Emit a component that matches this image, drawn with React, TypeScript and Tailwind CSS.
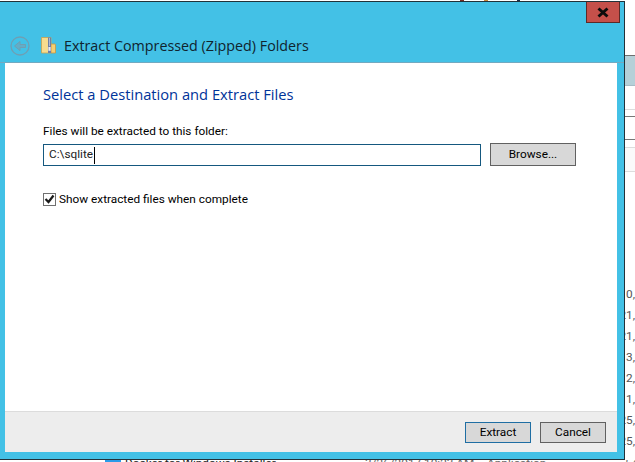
const font = "font-['Open_Sans','Noto_Sans',sans-serif]";
const small = "font-['Roboto','Open_Sans',sans-serif] text-[11.8px]";

const sideRows = ["0,", "21,", "21,", "3,", "2,", "1,", "25,", "25,"];

function BackIcon() {
  return (
    <svg width="20" height="20" viewBox="0 0 20 20" fill="none" stroke="#6f9fb3" strokeWidth="1.3">
      <circle cx="10" cy="10" r="9" />
      <path d="M15.500 8.500H10V5.500L4.500 10l5.500 4.500v-3H15.500z" fill="#62adc8" stroke="#6f9fb3" strokeWidth="1" />
    </svg>
  );
}

function ZipFolderIcon() {
  return (
    <svg width="16" height="17" viewBox="0 0 16 17">
      <path d="M0.500 0.500h9.500v15.500H0.500z" fill="#f6dc8e" stroke="#c9a24e" strokeWidth="0.8" />
      <path d="M10 7h3.500a1 1 0 0 1 1 1v8H10z" fill="#f3cf73" stroke="#c9963f" strokeWidth="0.8" />
      <path d="M7 0.500h3v15.500H7z" fill="#6f7fa6" />
      <path d="M8 1.500h1v1H8zM8 3.500h1v1H8zM8 5.500h1v1H8zM8 7.500h1v1H8z" fill="#eef2f8" />
      <path d="M7.400 10h2.200v3.800H7.400z" fill="#e9edf4" />
    </svg>
  );
}

function Button({ label, primary, className }: { label: string; primary?: boolean; className: string }) {
  return (
    <button
      className={`flex items-center justify-center border bg-[#d8d8d8] text-black ${small} ${
        primary ? "border-[#1f6ea3]" : "border-[#616161]"
      } ${className}`}
    >
      {label}
    </button>
  );
}

export default function App() {
  return (
    <div className={`flex h-[462px] w-[635px] flex-col overflow-hidden bg-white ${font}`}>
      {/* bits of the window behind, cut off by the top edge */}
      <div className="flex h-px pl-[460px]">
        <span className="h-px w-[4px] bg-[#7a2a20]" />
        <span className="ml-[20px] h-px w-[4px] bg-[#c98a3a]" />
        <span className="ml-[29px] h-px w-[3px] bg-[#1c2c4a]" />
      </div>

      <div className="flex h-[459px]">
        <div className="flex w-[625px] shrink-0 flex-col border-y border-r border-[#22323a] bg-[#43c1e6]">
          <div className="flex h-[61px] shrink-0 flex-col border-b border-[#72a9c0]">
            <div className="flex justify-end pr-[4px]">
              <div className="flex h-[21px] w-[34px] items-center justify-center border border-t-0 border-[#5c2a28] bg-[#c5504a]">
                <svg width="14" height="11" viewBox="0 0 14 11">
                  <path d="M2.500 1.500l9 8M11.500 1.500l-9 8" stroke="#0c0c0c" strokeWidth="3" />
                </svg>
              </div>
            </div>
            <div className="flex items-center pl-[10px] pt-[13px]">
              <BackIcon />
              <div className="ml-[11px] -mt-[2px]">
                <ZipFolderIcon />
              </div>
              <span className="ml-[7px] text-[14.3px] leading-5 text-[#10242e]">Extract Compressed (Zipped) Folders</span>
            </div>
          </div>

          <div className="flex flex-1 flex-col pb-[7px] pl-[5px] pr-[7px]">
            <div className="flex flex-1 flex-col bg-white pl-[38px] pt-[21px]">
              <h1 className="text-[14.7px] leading-5 text-[#003399]">Select a Destination and Extract Files</h1>
              <label className={`mt-[19px] leading-4 text-black ${small}`}>Files will be extracted to this folder:</label>
              <div className="mt-[4px] flex h-[23px] items-center">
                <div className={`mt-px flex h-[22px] w-[438px] items-center border border-[#15587f] pl-[5px] text-[#222] ${small}`}>
                  C:\sqlite
                  <span className="ml-px h-[17px] w-px bg-black" />
                </div>
                <Button label="Browse..." className="ml-[9px] h-[23px] w-[86px]" />
              </div>
              <div className="mt-[25px] flex items-center">
                <div className="flex h-[13px] w-[13px] items-center justify-center border border-[#707070] bg-white">
                  <svg width="11" height="10" viewBox="0 0 11 10">
                    <path d="M1.500 5l3 3 5-6.500" fill="none" stroke="#1a1a1a" strokeWidth="2.200" />
                  </svg>
                </div>
                <span className={`ml-[3px] leading-4 text-black ${small}`}>Show extracted files when complete</span>
              </div>
            </div>
            <div className="flex h-[41px] shrink-0 items-center justify-end gap-[9px] border-t border-[#dcdcdc] bg-[#ededed] pr-[11px] pt-px">
              <Button label="Extract" primary className="h-[21px] w-[66px]" />
              <Button label="Cancel" className="h-[21px] w-[66px]" />
            </div>
          </div>
        </div>

        {/* list window showing behind the dialog */}
        <div className="flex min-w-0 flex-1 flex-col overflow-hidden">
          <div className="mt-[54px] h-[31px] shrink-0 border-y border-t-[#6f6f6f] border-b-[#a7bcc6] bg-[#b5d0d8]" />
          <div className="h-[24px] shrink-0 border-b border-[#dddddd]" />
          <div className="h-[7px] shrink-0 border-b border-[#777777]" />
          <div className="h-[23px] shrink-0 border-b border-[#777777]" />
          <div className="h-[8px] shrink-0 border-b border-[#dddddd]" />
          <div className="h-[24px] shrink-0 border-b border-[#dddddd] bg-[#fafafa]" />
          <div className="flex flex-col pt-[112px]">
            {sideRows.map((row, i) => (
              <div key={i} className={`flex h-[21px] justify-end overflow-hidden leading-[21px] text-[#555] ${small}`}>
                <span className="shrink-0">{row}</span>
              </div>
            ))}
          </div>
        </div>
      </div>

      {/* last list row, almost entirely below the fold */}
      <div className={`flex h-[2px] overflow-hidden pl-[105px] leading-3 text-[#222] ${small}`}>
        <span className="h-[6px] w-[16px] shrink-0 border-2 border-[#2a9be8] bg-white" />
        <span className="ml-[4px] -mt-[3px] w-[240px] shrink-0 whitespace-nowrap">Docker for Windows Installer</span>
        <span className="-mt-[3px] w-[122px] shrink-0 whitespace-nowrap text-[#666]">3/26/2017 10:23 AM</span>
        <span className="-mt-[3px] w-[138px] shrink-0 whitespace-nowrap text-[#666]">Application</span>
        <span className="-mt-[3px] shrink-0 text-[#666]">54</span>
      </div>
    </div>
  );
}
